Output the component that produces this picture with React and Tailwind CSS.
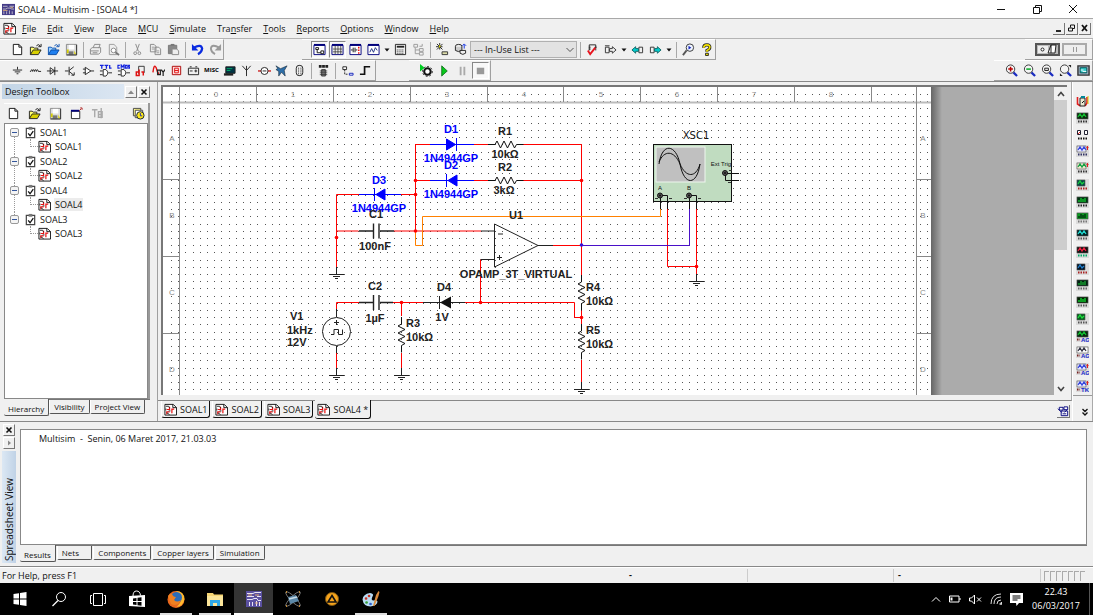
import clsx from 'clsx'

const ICONS = {
  newFile: (
    <>
      <path d="M2.5 1.5h6l3 3v8h-9z" fill="#fff" stroke="#111" />
      <path d="M8.5 1.5v3h3" fill="none" stroke="#111" />
    </>
  ),
  open: (
    <>
      <path d="M1.5 12.5v-8h3l1 1h4v2" fill="#ffff70" stroke="#222" />
      <path d="M1.5 12.5l3-5h8.500l-3 5z" fill="#d8d000" stroke="#222" />
      <path d="M8 3q2-2.500 4 0m1-2v3h-3" fill="none" stroke="#111" />
    </>
  ),
  openBlue: (
    <>
      <path d="M1.500 12.500v-8h3l1 1h4v2" fill="#9ad0ff" stroke="#0a50b0" />
      <path d="M1.500 12.500l3-5h8.500l-3 5z" fill="#2080f0" stroke="#0848a0" />
      <path d="M8 3q2-2.500 4 0m1-2v3h-3" fill="none" stroke="#0a50b0" />
    </>
  ),
  save: (
    <>
      <path d="M1.500 1.500h11v11h-11z" fill="#ddd" stroke="#888" />
      <path d="M4 2h6v5h-6z" fill="#fff" />
      <path d="M2 7h2v4h-2zM10 8l2 4h-2z" fill="#d8d000" />
      <path d="M4 9h5v4h-5z" fill="#777" />
      <path d="M12.500 2v11h-11" fill="none" stroke="#333" />
    </>
  ),
  print: (
    <>
      <path d="M4.500 5l1.500-3.500h6l-1.500 4M1.500 6.500l2-1.500h9v5l-2 2h-9z" fill="#eee" stroke="#888" />
      <path d="M2 8.500h8.500M4 10.500h5" stroke="#888" />
    </>
  ),
  preview: (
    <>
      <path d="M2.500 1.500h5l3 3v8h-8z" fill="#eee" stroke="#999" />
      <circle cx="7" cy="8" r="2.500" fill="#fff" stroke="#888" />
      <path d="M9 10l4 3" stroke="#777" strokeWidth="2" />
    </>
  ),
  cut: (
    <>
      <path d="M5 1l3 8M9 1l-3 8" stroke="#888" fill="none" />
      <circle cx="4.500" cy="11" r="1.500" fill="none" stroke="#888" />
      <circle cx="9" cy="11" r="1.500" fill="none" stroke="#888" />
    </>
  ),
  copy: (
    <>
      <path d="M1.500 1.500h4l2 2v6h-6zM6.500 4.500h4l2 2v6h-6z" fill="#eee" stroke="#888" />
      <path d="M3 4.500h3M3 6.500h3M8 8.500h3M8 10.500h3" stroke="#999" />
    </>
  ),
  paste: (
    <>
      <path d="M1.500 2.500h9v9h-9z" fill="#888" stroke="#777" />
      <path d="M4 1h4v2h-4z" fill="#777" />
      <path d="M5.500 6.500h5l2 2v4h-7z" fill="#eee" stroke="#888" />
    </>
  ),
  undo: (
    <>
      <path d="M3 5q8-4.500 9 1q-.5 4-4.500 6" fill="none" stroke="#0a2be0" strokeWidth="2.400" />
      <path d="M1 1v7h7z" fill="#0a2be0" />
    </>
  ),
  redo: (
    <>
      <path d="M11 5q-8-4.500-9 1q.5 4 4.500 6" fill="none" stroke="#999" strokeWidth="2" />
      <path d="M13 1v7h-7z" fill="#999" />
    </>
  ),
  hierarchy: (
    <>
      <path d="M1 2.500h12v10h-12z" fill="#fff" stroke="#00007c" />
      <path d="M1 2h12" stroke="#00007c" strokeWidth="2" />
      <path d="M3 5h3v2h-3zM4.500 7v3.500h4M8.500 8.500h3v3h-3z" fill="none" stroke="#111" />
    </>
  ),
  gridView: (
    <>
      <path d="M1 2.500h12v10h-12z" fill="#eee" stroke="#00007c" />
      <path d="M1 2h12" stroke="#00007c" strokeWidth="2" />
      <path d="M4.500 3v9M7.500 3v9M10.500 3v9M2 6.500h10M2 9.500h10" stroke="#333" strokeWidth=".8" />
    </>
  ),
  ladder: (
    <>
      <path d="M1 2.500h12v10h-12z" fill="#fff" stroke="#00007c" />
      <path d="M1 2h12" stroke="#00007c" strokeWidth="2" />
      <path d="M2 7.500h2M4.500 5v5M6.500 5v5M7 7.500h2" stroke="#111" />
      <path d="M10.500 4v2M10.500 7v1.500M10.500 10v1.500" stroke="#e00" strokeWidth="1.500" />
    </>
  ),
  grapher: (
    <>
      <path d="M1 2.500h12v10h-12z" fill="#fff" stroke="#00007c" />
      <path d="M1 2h12" stroke="#00007c" strokeWidth="2" />
      <path d="M3 10l2-4 2 4 2-5 2 3" fill="none" stroke="#1a2c80" />
    </>
  ),
  calc: (
    <>
      <path d="M1.500 1.500h11v11h-11z" fill="#eee" stroke="#222" />
      <path d="M3 4h8" stroke="#222" strokeWidth="2" />
      <path d="M3 7.500h8M3 9.500h8M3 11.500h8" stroke="#222" strokeDasharray="1 1" />
    </>
  ),
  treeGray: <path d="M2 1.500h4v3h-4zM3.500 5v6.500h4M3.500 7.500h4M8 6h4v3h-4zM8 10h4v3h-4zM8 3.500h3V1" fill="none" stroke="#999" />,
  wizard: (
    <>
      <path d="M1 1l6 6M4 0v7M0 4h7M7 1l-6 6" stroke="#222" />
      <path d="M4 2l1 2-2 1z" fill="#ff0" />
      <path d="M6.500 9.500h6v3h-6z" fill="#dda" stroke="#333" />
    </>
  ),
  database: (
    <>
      <ellipse cx="5" cy="3.500" rx="3.500" ry="2" fill="#eee" stroke="#222" />
      <path d="M1.500 4v4q3 2.500 7 0v-4" fill="#ccc" stroke="#222" />
      <path d="M6.500 8v3q3 2.500 6 0v-3z" fill="#eee" stroke="#222" />
      <path d="M11 6V2M9 3l2-2 2 2" stroke="#0a2be0" fill="none" />
    </>
  ),
  erc: (
    <>
      <path d="M3.500 8v-6h7v6M3 4.500h2M3 6.500h2M9.500 4.500h2" fill="none" stroke="#222" />
      <path d="M2 8l2.500 4L10 5" fill="none" stroke="#e8141e" strokeWidth="2" />
    </>
  ),
  transferOut: (
    <>
      <path d="M1.500 4.500h4v6h-4zM1 3h5" fill="none" stroke="#333" />
      <path d="M6 6h3v-2l4 3.500-4 3.500v-2h-3z" fill="#eee" stroke="#333" />
    </>
  ),
  backAnnotate: (
    <>
      <path d="M8.500 4.500h4v6h-4z" fill="none" stroke="#333" />
      <path d="M8 6h-3v-2l-4 3.500 4 3.500v-2h3z" fill="#0cc" stroke="#166" />
    </>
  ),
  forwardAnnotate: (
    <>
      <path d="M1.500 4.500h4v6h-4z" fill="none" stroke="#333" />
      <path d="M6 6h3v-2l4 3.500-4 3.500v-2h-3z" fill="#0cc" stroke="#166" />
    </>
  ),
  find: (
    <>
      <circle cx="8.500" cy="5" r="4" fill="#eef4ff" stroke="#333" />
      <path d="M5 8l-4 5" stroke="#555" strokeWidth="2" />
      <path d="M7 3v4l3-2z" fill="#12b" />
    </>
  ),
  help: (
    <>
      <path d="M4 5q0-3 3.500-3t3 3q0 1.500-3 3v1.500" fill="none" stroke="#222" strokeWidth="3.400" />
      <path d="M4 5q0-3 3.500-3t3 3q0 1.500-3 3v1.500" fill="none" stroke="#f0e000" strokeWidth="1.800" />
      <path d="M6 11h3v2.500h-3z" fill="#f0e000" stroke="#222" />
    </>
  ),
  source: <path d="M2 6.500h10M7 3v3M4 8.500h6M6 10.500h2" stroke="#222" fill="none" />,
  inductor: <path d="M1 8h1q1-4 2 0q1-4 2 0q1-4 2 0q1-4 2 0h3" stroke="#222" fill="none" />,
  diode: <path d="M1 7.500h12M4.500 4v7l5-3.500zM9.500 3v9" stroke="#222" fill="#fff" />,
  transistor: <path d="M1 7.500h4M5.500 3v9M5.500 7l5-4M5.500 8l5 4M8 12h3v-3" stroke="#222" fill="none" />,
  opamp: <path d="M3.500 3.500v8l6-4zM1 5.500h3M1 9.500h3M9 7.500h4" stroke="#222" fill="#fff" />,
  ttl: (
    <>
      <path d="M4.500 6v7h3q4-3.500 0-7zM1 7.500h3M1 11.500h3M10 9.500h4" stroke="#222" fill="#fff" />
      <path d="M1 1.500h4M3 1v4M6 1.500h4M8 1v4M11.500 1v3.500h2" stroke="#12d" strokeWidth="1.400" fill="none" />
    </>
  ),
  cmos: (
    <>
      <path d="M4.500 6v7h3q4-3.500 0-7zM1 7.500h3M1 11.500h3M10 9.500h4" stroke="#222" fill="#fff" />
      <path d="M3 1.500h-2v3h2M4.500 5V1l1.500 2 1.500-2v4M9 1.500h2v3h-2zM14 1.500h-1.500v1.500h1v1.500h-1.500" stroke="#12d" strokeWidth="1.200" fill="none" />
    </>
  ),
  digital: (
    <>
      <path d="M5 10.500v-8h6v7" fill="none" stroke="#333" />
      <path d="M2.500 8.500h3v4h-3zM5.500 6v7M8 8.500h2v4" fill="none" stroke="#e01010" strokeWidth="1.600" />
    </>
  ),
  mixed: (
    <>
      <path d="M1 9q1-10 3.500-5q1 5 3 7" fill="none" stroke="#e01010" strokeWidth="1.500" />
      <path d="M6 6.500h3v5h-3zM10 6l2 3 2-3M12 9v4" fill="none" stroke="#222" strokeWidth="1.300" />
    </>
  ),
  indicator: (
    <>
      <path d="M2.500 2.500h9v9h-9z" fill="#fdd" stroke="#a00" />
      <path d="M5 4.500h4v5h-4zM5 7h4" fill="none" stroke="#e01010" />
    </>
  ),
  power: <path d="M1.500 4.500h11v7h-11zM3 3h2M9 3h2M3 7.500h3M8 7.500h3M9.500 6v3" fill="none" stroke="#222" />,
  peripherals: (
    <>
      <path d="M3 3h10v7h-10z" fill="#034" stroke="#222" />
      <path d="M4 5h6M4 7h4" stroke="#0a6" />
      <path d="M1 10h10v2.500h-10z" fill="#222" />
    </>
  ),
  rf: <path d="M2.500 2l4.500 5 4.500-5M7 2v11" stroke="#222" fill="none" />,
  motor: (
    <>
      <path d="M0 7.500h14" stroke="#c22" strokeWidth="1.500" />
      <circle cx="7" cy="7.500" r="3.800" fill="#fff" stroke="#222" />
      <path d="M5 7.500h4" stroke="#222" />
    </>
  ),
  ni: <path d="M1 2l5 3 7-3-3 5 1 6-4-4-3 4v-5l-3-2 2-1z" fill="#2d6ea8" stroke="#123" strokeWidth=".6" />,
  connector: (
    <>
      <rect x="3.500" y="1.500" width="7" height="11" rx="3" fill="#eee" stroke="#222" />
      <path d="M6 4v7M8.500 4v7" stroke="#222" strokeDasharray="1 1" />
    </>
  ),
  mcu: (
    <>
      <path d="M2 2.500h10" stroke="#222" strokeWidth="3" strokeDasharray="3 .5" />
      <path d="M5 6h4v7h-4zM3 7.500h8M3 9.500h8M3 11.500h8" fill="#888" stroke="#222" strokeWidth=".8" />
    </>
  ),
  hierBlock: (
    <>
      <path d="M2 3h4v3h-4z" fill="#fff" stroke="#222" />
      <path d="M4 6v5h4" fill="none" stroke="#222" strokeDasharray="2 1" />
      <path d="M9 10h4v2h-4z" fill="#fff" stroke="#12b" />
    </>
  ),
  bus: <path d="M1 11h5V3h6" fill="none" stroke="#111" strokeWidth="1.800" />,
  interactive: (
    <>
      <circle cx="8" cy="8" r="3.500" fill="#fff" stroke="#111" strokeWidth="2.200" />
      <circle cx="8" cy="8" r="5.300" fill="none" stroke="#111" strokeDasharray="2 2" />
      <path d="M0 0v8l5-4z" fill="#0c2" />
    </>
  ),
  run: <path d="M4 2v11l6-5.500z" fill="#08c81c" stroke="#066010" strokeWidth=".8" />,
  pause: <path d="M4 3h2v9h-2zM8 3h2v9h-2z" fill="#aaa" />,
  stop: <path d="M3 4h8v7h-8z" fill="#999" />,
  zoomIn: <Magnifier mark={<path d="M3.500 5.500h5M6 3v5" stroke="#b00" strokeWidth="1.600" />} />,
  zoomOut: <Magnifier mark={<path d="M3.500 5.500h5" stroke="#0a2" strokeWidth="1.600" />} />,
  zoomArea: <Magnifier mark={<path d="M4 4.500h4v2.500h-4z" stroke="#222" fill="#ddd" />} />,
  zoomSheet: (
    <>
      <Magnifier />
      <path d="M10 1h3v3zM1 10v3h3z" fill="#222" />
    </>
  ),
  fullScreen: (
    <>
      <path d="M1 2h12v10h-12z" fill="#9ab" stroke="#333" strokeWidth="1.500" />
      <path d="M3.500 4h7v5.500h-7z" fill="#3cc" stroke="#055" />
      <path d="M4 6.500h3M6 8h4" stroke="#fff" />
    </>
  ),
  closeDesign: (
    <>
      <path d="M1.500 4.500h9v8h-9z" fill="#fff" stroke="#222" />
      <path d="M1 4h9" stroke="#00007c" strokeWidth="2" />
      <path d="M10 4l2-2M11 1h2v2" stroke="#b02020" fill="none" />
    </>
  ),
  rename: <path d="M1 3h6M4 3v8M8 5h4v6h-4zM8 8h4M11 1v11" fill="none" stroke="#aaa" strokeWidth="1.500" />,
  recent: (
    <>
      <path d="M1.500 1.500h8v8h-8z" fill="#fff890" stroke="#444" />
      <path d="M3.500 3.500h8v8h-8z" fill="#fff" stroke="#444" />
      <circle cx="9" cy="9" r="4" fill="#ffe818" stroke="#123" />
      <path d="M9 6.500v3h2" fill="none" stroke="#12b" />
    </>
  ),
  clipboard: (
    <>
      <path d="M2.500 2.500h9v10h-9z" fill="#fff" stroke="#444" strokeWidth="1.300" />
      <path d="M5 1h4v3h-4z" fill="#777" />
      <path d="M4.500 8l2 2.500 3.500-5" fill="none" stroke="#111" strokeWidth="1.400" />
    </>
  ),
  sheet: (
    <>
      <path d="M1 1.500h9l3.500 3.500v8h-12.500z" fill="#fff" stroke="#111" />
      <path d="M9.500 1.500v3.500h4" fill="none" stroke="#111" />
      <path d="M3 7h3V4M3 12V9.500h3M8.500 6v5M8 6.500h3" fill="none" stroke="#e81010" strokeWidth="1.300" />
      <path d="M2 3.500h3l1 2M2 6v2M5 8.500h2M3 10.500l3 2" fill="none" stroke="#222" />
    </>
  ),
  app: (
    <>
      <path d="M0 1h14v12h-14z" fill="#453c88" />
      <path d="M1 3.500h5M8 3.500h5M1 6.500h3l2-1h3l1 1h3M2 9v3M5 9v3M8 8v4M11 9v3" fill="none" stroke="#ddd" strokeWidth=".8" />
      <path d="M1 8h5M9 5h3" stroke="#d8a878" />
    </>
  ),
  windows: (
    <>
      <path d="M2.500 2.500h4v3h-4zM7.500 2h4v3h-4zM4.500 6.500h7v5h-7z" fill="#fff" stroke="#00007c" />
      <path d="M1 4l4 4M11 5l-3 3M6 9.500h4" stroke="#00007c" />
    </>
  ),
}

function Magnifier({ mark }) {
  return (
    <>
      <path d="M9 9l4 4" stroke="#1a2cc0" strokeWidth="2.400" />
      <circle cx="6" cy="5.500" r="4.500" fill="#f4f4f4" stroke="#333" />
      {mark}
    </>
  )
}

function Icon({ name }) {
  return (
    <svg viewBox="0 0 14 14" className="h-[13px] w-[13px] shrink-0" fill="none" aria-hidden="true">
      {ICONS[name]}
    </svg>
  )
}

function ToolButton({ name, pressed }) {
  return (
    <button
      aria-label={name}
      className={clsx(
        'flex h-[17px] w-[17px] shrink-0 items-center justify-center',
        pressed && 'border border-[#888] border-r-white border-b-white bg-[#f8f8f8]'
      )}
    >
      {name === 'misc' ? <span className="text-[6px] font-bold text-black">MISC</span> : <Icon name={name} />}
    </button>
  )
}

function Divider() {
  return <span className="mx-[2px] h-4 w-px shrink-0 bg-[#a8a8a8]" />
}

function Caret() {
  return (
    <svg viewBox="0 0 6 4" className="mx-px h-1 w-[6px] shrink-0" aria-hidden="true">
      <path d="M0.500 0.500h5L3 3.500z" fill="#111" />
    </svg>
  )
}

function TitleBar() {
  return (
    <header className="flex h-[19px] shrink-0 items-center border-b border-[#a8a8a8] bg-white pl-[2px]">
      <Icon name="app" />
      <h1 className="ml-[3px] flex-1">SOAL4 - Multisim - [SOAL4 *]</h1>
      <button aria-label="Minimize" className="flex w-9 justify-center">
        <svg viewBox="0 0 10 10" className="h-[10px] w-[10px]"><path d="M1 5.500h8" stroke="#111" /></svg>
      </button>
      <button aria-label="Restore" className="flex w-9 justify-center">
        <svg viewBox="0 0 10 10" className="h-[10px] w-[10px]" fill="none" stroke="#111">
          <path d="M1.500 3.500h6v6h-6zM3.500 3v-1.500h6v6h-2" />
        </svg>
      </button>
      <button aria-label="Close" className="mr-[2px] flex w-9 justify-center">
        <svg viewBox="0 0 10 10" className="h-[10px] w-[10px]" stroke="#111"><path d="M1 1l8 8M9 1l-8 8" /></svg>
      </button>
    </header>
  )
}

const MENUS = [
  ['', 'F', 'ile'], ['', 'E', 'dit'], ['', 'V', 'iew'], ['', 'P', 'lace'], ['', 'M', 'CU'], ['', 'S', 'imulate'],
  ['Tra', 'n', 'sfer'], ['', 'T', 'ools'], ['', 'R', 'eports'], ['', 'O', 'ptions'], ['', 'W', 'indow'], ['', 'H', 'elp'],
]

function MenuBar() {
  return (
    <nav className="flex h-5 shrink-0 items-center border-b border-[#b4b4b4] pr-[2px] pl-[3px]">
      <Icon name="sheet" />
      <div className="ml-[6px] flex flex-1 gap-[11px]">
        {MENUS.map(([before, key, after]) => (
          <button key={key + after}>
            {before}
            <u className="underline-offset-1">{key}</u>
            {after}
          </button>
        ))}
      </div>
      <div className="flex gap-px">
        <MdiButton label="Minimize child" d="M2 8h5" />
        <MdiButton label="Restore child" d="M1.500 5h4v3h-4zM3.500 4.500v-2.500h4v3.500h-1.500" thin />
        <MdiButton label="Close child" d="M2 2l5 6M7 2l-5 6" />
      </div>
    </nav>
  )
}

function MdiButton({ label, d, thin }) {
  return (
    <button aria-label={label} className="flex h-3 w-3 items-center justify-center border-r border-b border-[#777]">
      <svg viewBox="0 0 9 10" className="h-[10px] w-[9px]" fill="none" stroke="#111" strokeWidth={thin ? 1 : 1.8}>
        <path d={d} />
      </svg>
    </button>
  )
}

const PARTS = [
  'source', 'inductor', 'diode', 'transistor', 'opamp', 'ttl', 'cmos', 'digital', 'mixed',
  'indicator', 'power', 'misc', 'peripherals', 'rf', 'motor', 'ni', 'connector',
]

function Strip({ className, children }) {
  return (
    <div className={clsx('flex shrink-0 items-center gap-px border-t border-r border-b border-[#a0a0a0] border-t-white', className)}>
      {children}
    </div>
  )
}

function Toolbars() {
  return (
    <div className="shrink-0 border-b border-[#888]">
      <div className="flex h-[21px]">
        <Strip className="w-[224px] pl-[9px]">
          {['newFile', 'open', 'openBlue', 'save'].map((n) => <ToolButton key={n} name={n} />)}
          <Divider />
          {['print', 'preview'].map((n) => <ToolButton key={n} name={n} />)}
          <Divider />
          {['cut', 'copy', 'paste'].map((n) => <ToolButton key={n} name={n} />)}
          <Divider />
          {['undo', 'redo'].map((n) => <ToolButton key={n} name={n} />)}
        </Strip>
        <Strip className="ml-[78px] w-[414px] pl-[9px]">
          <ToolButton name="hierarchy" pressed />
          <ToolButton name="gridView" pressed />
          <ToolButton name="ladder" />
          <ToolButton name="grapher" />
          <Caret />
          <ToolButton name="calc" />
          <ToolButton name="treeGray" />
          <Divider />
          <ToolButton name="wizard" />
          <ToolButton name="database" />
          <div className="relative w-[107px]">
            <select aria-label="In-use list" className="block h-[17px] w-full appearance-none border border-[#b0b0b0] bg-[#e2e2e2] pl-[3px] leading-[14px]">
              <option>--- In-Use List ---</option>
            </select>
            <svg viewBox="0 0 8 6" className="pointer-events-none absolute top-[6px] right-[3px] h-[6px] w-2" fill="none" stroke="#555">
              <path d="M.5 1l3.500 3.500L7.500 1" />
            </svg>
          </div>
          <Divider />
          <ToolButton name="erc" />
          <ToolButton name="transferOut" />
          <Caret />
          <ToolButton name="backAnnotate" />
          <ToolButton name="forwardAnnotate" />
          <Caret />
          <Divider />
          <ToolButton name="find" />
          <ToolButton name="help" />
        </Strip>
        <Strip className="ml-auto w-[68px] justify-between pr-[5px] pl-[10px]">
          <button aria-label="Simulation switch">
            <svg viewBox="0 0 25 13" className="h-[13px] w-[25px]">
              <path d="M1 1h23v11h-23z" fill="#bbb" stroke="#555" strokeWidth="2" />
              <path d="M3 3h10v7h-10z" fill="#eee" />
              <path d="M13 10l3-8h5l-1 8zM16 2v8" fill="#fff" stroke="#222" />
              <circle cx="7.500" cy="6.500" r="1.500" fill="#fff" stroke="#222" />
            </svg>
          </button>
          <button aria-label="Pause switch">
            <svg viewBox="0 0 25 13" className="h-[13px] w-[25px]">
              <path d="M1 1h23v11h-23z" fill="#eee" stroke="#aaa" strokeWidth="2" />
              <path d="M11.500 4v5M14.500 4v5" stroke="#999" />
            </svg>
          </button>
        </Strip>
      </div>
      <div className="flex h-[21px]">
        <Strip className="w-[376px] justify-between pr-px pl-[9px]">
          <div className="flex w-[299px] justify-between">
            {PARTS.map((n) => <ToolButton key={n} name={n} />)}
          </div>
          <Divider />
          <ToolButton name="mcu" />
          <Divider />
          <ToolButton name="hierBlock" />
          <ToolButton name="bus" />
        </Strip>
        <Strip className="ml-[33px] w-[82px] pl-[9px]">
          <ToolButton name="interactive" />
          <ToolButton name="run" />
          <ToolButton name="pause" />
          <ToolButton name="stop" pressed />
        </Strip>
        <Strip className="ml-auto w-[99px] pl-[9px]">
          {['zoomIn', 'zoomOut', 'zoomArea', 'zoomSheet', 'fullScreen'].map((n) => <ToolButton key={n} name={n} />)}
        </Strip>
      </div>
    </div>
  )
}

const DESIGNS = ['SOAL1', 'SOAL2', 'SOAL4', 'SOAL3']

function PanelButton({ label, d }) {
  return (
    <button aria-label={label} className="flex h-3 w-3 items-center justify-center border border-white border-r-[#777] border-b-[#777]">
      <svg viewBox="0 0 8 8" className="h-2 w-2 shrink-0">{d}</svg>
    </button>
  )
}

const closeGlyph = <path d="M1.500 1.500l5 5M6.500 1.500l-5 5" stroke="#111" strokeWidth="1.600" />

function DesignToolbox() {
  return (
    <aside className="flex w-[158px] shrink-0 flex-col border-r border-[#a0a0a0] pt-[2px] pr-[7px] pb-[5px]">
      <div className="flex h-[15px] items-center gap-px pl-[2px]">
        <h2 className="flex h-full flex-1 items-center bg-linear-to-r from-[#c3d5e6] to-[#dbe6f2] pl-[3px]">Design Toolbox</h2>
        <PanelButton label="Collapse" d={<path d="M1 6h6L4 2.500z" fill="#888" />} />
        <PanelButton label="Close" d={closeGlyph} />
      </div>
      <div className="mt-1 ml-1 flex min-h-0 flex-1 flex-col border-r-2 border-[#999]">
        <div className="flex h-[20px] items-center gap-1 border-t border-white pr-px pl-px">
          {['newFile', 'open', 'save', 'closeDesign', 'rename'].map((n) => <ToolButton key={n} name={n} />)}
          <span className="flex-1" />
          <ToolButton name="recent" />
        </div>
        <ul className="min-h-0 flex-1 border border-[#888] bg-white pt-px">
          {DESIGNS.map((name, i) => (
            <li key={name} className="flex h-[29px]">
              <div className="flex w-[19px] flex-col items-center">
                <span className={clsx('h-[3px] border-l border-dotted border-[#999]', i === 0 && 'invisible')} />
                <button aria-label={`Collapse ${name}`} className="flex h-[9px] w-[9px] shrink-0 items-center justify-center rounded-[2px] border border-[#999] bg-[#f4f4f4]">
                  <span className="h-px w-[5px] bg-[#34569c]" />
                </button>
                <span className={clsx('flex-1 border-l border-dotted border-[#999]', i === DESIGNS.length - 1 && 'invisible')} />
              </div>
              <div>
                <div className="flex h-[14px] items-center gap-[3px]">
                  <Icon name="clipboard" />
                  {name}
                </div>
                <div className="flex h-[15px] items-center">
                  <span className="mb-[7px] ml-[6px] h-2 w-2 border-b border-l border-dotted border-[#999]" />
                  <Icon name="sheet" />
                  <span className={clsx('ml-[3px] px-px leading-[13px]', name === 'SOAL4' && 'bg-[#ececec]')}>{name}</span>
                </div>
              </div>
            </li>
          ))}
        </ul>
      </div>
      <div className="ml-1 flex h-[17px] items-start border-t border-[#777]">
        <PageTab active>Hierarchy</PageTab>
        <PageTab>Visibility</PageTab>
        <PageTab>Project View</PageTab>
      </div>
    </aside>
  )
}

function PageTab({ active, children }) {
  return (
    <button
      className={clsx(
        'flex items-center rounded-b-[2px] border-r border-b border-[#555] px-1 text-[8px] whitespace-nowrap',
        active ? '-mt-px h-[17px] bg-[#f0f0f0] pt-[2px]' : 'h-[14px] border-l border-l-white'
      )}
    >
      {children}
    </button>
  )
}

const PITCH = 7.2
const GRID = Array.from({ length: 43 }, (_, row) =>
  Array.from({ length: 106 }, (_, col) => `M${Math.round(171 + col * PITCH)} ${Math.round(94 + row * PITCH)}.5h1`).join('')
).join('')

const RED = '#ff0000'
const BLUE = '#0000ff'

function Ground({ x, y }) {
  return <path d={`M${x - 7} ${y}.5h15M${x - 3} ${y + 2}.5h7M${x - 1} ${y + 4}.5h3`} stroke="#222" />
}

function ResistorH({ x, y }) {
  return <path d={`M${x - 7} ${y}h7l2-3.500 3.500 7 3.500-7 3.500 7 3.500-7 3.500 7 2-3.500h7`} stroke="#111" />
}

function ResistorV({ x, y }) {
  return <path d={`M${x} ${y - 7}v7l-3.500 2 7 3.500-7 3.500 7 3.500-7 3.500 7 3.500-3.500 2v7`} stroke="#111" />
}

function Label({ x, y, children, color = '#222', anchor = 'middle' }) {
  return (
    <text x={x} y={y} fill={color} stroke="none" textAnchor={anchor} className="font-['Liberation_Sans',Arial,sans-serif] text-[11px] font-bold">
      {children}
    </text>
  )
}

function Jack({ x, y }) {
  return (
    <>
      <circle cx={x} cy={y} r="2.500" fill="#555" stroke="#111" />
      <circle cx={x} cy={y} r="1" fill="#111" stroke="none" />
    </>
  )
}

function Schematic() {
  return (
    <svg viewBox="163 87 768 308" className="h-[308px] w-[768px] shrink-0 bg-white" fill="none" role="img" aria-label="Schematic sheet">
      <path d={GRID} stroke="#555" shapeRendering="crispEdges" />
      <path d="M163 102.500h768" stroke="#bbb" strokeWidth="2" />
      <path d="M179.500 87v308M916.500 87v308" stroke="#888" />
      <g stroke="#888">
        {[256, 333, 410, 487, 563, 640, 717, 794, 871].map((x) => <path key={x} d={`M${x}.5 87v15`} />)}
        {[179, 256, 333].map((y) => <path key={y} d={`M163 ${y}.5h16M917 ${y}.5h14`} />)}
      </g>
      <g fill="#888" textAnchor="middle" className="font-['Liberation_Sans',Arial,sans-serif] text-[8px]">
        {[216, 293, 370, 447, 524, 601, 677, 754, 831].map((x, i) => <text key={x} x={x} y="97">{i}</text>)}
        {['A', 'B', 'C', 'D'].map((c, i) => (
          <g key={c}>
            <text x="172" y={141 + i * 77}>{c}</text>
            <text x="923" y={141 + i * 77}>{c}</text>
          </g>
        ))}
      </g>

      <g stroke={RED}>
        <path d="M415.500 144.500h15M474 144.500h15M523 144.500h58.500V275M415.500 144V231" />
        <path d="M415.500 180.500h15M474 180.500h15M523 180.500h58" />
        <path d="M336.500 267V194.500H359M401 194.500h14M336.500 231h22M394 231h87" />
        <path d="M336.500 309v-6.500H359M393 302.500h30M465 302.500h109.500V317.500h7M480.500 302V259.500" />
        <path d="M401.500 302v14M401.500 353v15M336.500 353v15M581.500 310v14M581.500 360v22M553 245.500h28" />
        <path d="M667.500 209v57.500h29M696.500 209v65" />
      </g>
      <path d="M415.500 231V245.500h7V216.500H660.500V209" stroke="#ff8000" />
      <path d="M581 245.500H689.500V209" stroke="#4a10c8" />

      <g stroke="#222">
        <path d="M359 231h14M380 231h14M359 302.500h14M380 302.500h13M373.500 223.500v15M379 223.500v15M373.500 295v15M379 295v15" strokeWidth="1.400" />
        <path d="M481 231h13M480.500 259.500h14M538 245.500h15M494.500 224v43l43.500-21.500zM498 234h5M497 257.500h5M499.500 255v5" />
        <path d="M423 302.500h42M439.500 296v13M336.500 267v7M401.500 368v7M336.500 368v7M581.500 382v7M696.500 274v7" />
        <path d="M336.500 309v8M336.500 346v7M334 322.500h5M336.500 320v5M331 334.500h3v-5h4.500v5h4v-5" />
        <circle cx="336.500" cy="331.500" r="14" />
      </g>
      <path d="M451 296.500v12l-11-6z" fill="#111" />

      <g stroke={BLUE} fill={BLUE}>
        <path d="M430 144.500h44M430 180.500h44M359 194.500h42M456.500 138v13M446.500 174v13M374.500 188v13" />
        <path d="M446.500 139v11l9-5.500zM457 175v11l-9-5.500zM385 189v11l-9-5.500z" />
      </g>

      <ResistorH x={495} y={144.5} />
      <ResistorH x={495} y={180.5} />
      <ResistorV x={401.5} y={324} />
      <ResistorV x={581.5} y={282} />
      <ResistorV x={581.5} y={331} />
      <Ground x={336} y={274} />
      <Ground x={336} y={375} />
      <Ground x={401} y={375} />
      <Ground x={581} y={389} />
      <Ground x={696} y={281} />

      <g fill={RED}>
        {[[336.5, 237.5], [415.5, 231], [415.5, 194.5], [415.5, 180.5], [581.5, 180.5], [401.5, 302.5], [480.5, 302.5], [581.5, 317.5], [696.5, 266.5]].map(
          ([x, y]) => <circle key={`${x},${y}`} cx={x} cy={y} r="1.800" />
        )}
      </g>
      <circle cx="581.500" cy="245" r="1.800" fill="#3a10d8" />

      <Label x={451} y={133} color={BLUE}>D1</Label>
      <Label x={451} y={162} color={BLUE}>1N4944GP</Label>
      <Label x={451} y={169} color={BLUE}>D2</Label>
      <Label x={451} y={198} color={BLUE}>1N4944GP</Label>
      <Label x={379} y={184} color={BLUE}>D3</Label>
      <Label x={379} y={212} color={BLUE}>1N4944GP</Label>
      <Label x={505} y={135}>R1</Label>
      <Label x={505} y={158}>10kΩ</Label>
      <Label x={505} y={171}>R2</Label>
      <Label x={504} y={194}>3kΩ</Label>
      <Label x={376} y={218}>C1</Label>
      <Label x={375} y={250}>100nF</Label>
      <Label x={516} y={219}>U1</Label>
      <Label x={516} y={278}>OPAMP_3T_VIRTUAL</Label>
      <Label x={375} y={290}>C2</Label>
      <Label x={375} y={322}>1µF</Label>
      <Label x={444} y={291}>D4</Label>
      <Label x={442} y={321}>1V</Label>
      <Label x={406} y={327} anchor="start">R3</Label>
      <Label x={406} y={341} anchor="start">10kΩ</Label>
      <Label x={586} y={291} anchor="start">R4</Label>
      <Label x={586} y={305} anchor="start">10kΩ</Label>
      <Label x={586} y={334} anchor="start">R5</Label>
      <Label x={586} y={348} anchor="start">10kΩ</Label>
      <Label x={290} y={320} anchor="start">V1</Label>
      <Label x={287} y={334} anchor="start">1kHz</Label>
      <Label x={287} y={346} anchor="start">12V</Label>

      <rect x="653.500" y="144.500" width="78" height="57" fill="#c0dcc0" stroke="#111" />
      <rect x="656" y="147" width="49" height="35" fill="#c0c0c0" stroke="#eef6ee" />
      <path d="M659 164C662 142 676 144 680 164C684 186 697 186 700 164M659 162C664 150 674 150 680 164C686 178 696 178 700 164" stroke="#111" />
      <path d="M660.500 195v14M661 195.500h6.500V209M689.500 195v14M690 195.500h6.500V209M725.500 173.500H739M725.500 173v7.500H739" stroke="#111" />
      <path d="M655 198.500h3M669 198.500h3M684 198.500h3M698 198.500h3M729 170.500h3M728 182.500h3" stroke="#333" />
      <Jack x={660} y={195.5} />
      <Jack x={689} y={195.5} />
      <Jack x={725} y={173} />
      <g fill="#111" textAnchor="middle" className="font-['Liberation_Sans',Arial,sans-serif] text-[6px]">
        <text x="721" y="166">Ext Trig</text>
        <text x="660" y="190">A</text>
        <text x="689" y="190">B</text>
      </g>
      <text x="696" y="139" fill="#111" textAnchor="middle" className="font-['DejaVu_Sans',sans-serif] text-[10px]">XSC1</text>
    </svg>
  )
}

function ScrollArrow({ label, d }) {
  return (
    <button aria-label={label} className="flex h-[13px] w-full shrink-0 items-center justify-center">
      <svg viewBox="0 0 8 6" className="h-[6px] w-2" fill="none" stroke="#444" strokeWidth="1.600"><path d={d} /></svg>
    </button>
  )
}

const SHEETS = ['SOAL1', 'SOAL2', 'SOAL3', 'SOAL4 *']

function Workspace() {
  return (
    <main className="flex min-w-0 flex-1 flex-col">
      <div className="flex min-h-0 flex-1 border-r border-b border-r-[#aaa] border-b-[#888] pt-[3px] pr-1 pb-[5px] pl-[3px]">
        <div className="flex min-w-0 flex-1 border-t-2 border-l-2 border-[#777]">
          <Schematic />
          <div className="flex-1 bg-[#ababab]">
            <div className="h-full w-[11px] bg-linear-to-r from-[#666] to-[#ababab]" />
          </div>
          <div className="flex w-[13px] shrink-0 flex-col bg-[#f0f0f0]">
            <ScrollArrow label="Scroll up" d="M1 5l3-3.500 3 3.500" />
            <div className="h-[150px] bg-[#cdcdcd]" />
            <span className="flex-1" />
            <ScrollArrow label="Scroll down" d="M1 1l3 3.500 3-3.500" />
          </div>
        </div>
      </div>
      <div className="flex h-5 shrink-0 items-start gap-[2px] pr-[2px] pl-[3px]">
        {SHEETS.map((name, i) => (
          <button
            key={name}
            className={clsx(
              'flex items-center gap-[3px] rounded-b-[3px] border-r border-b border-[#111] px-[2px] whitespace-nowrap',
              i === 3 ? '-mt-px h-[19px] bg-[#f0f0f0]' : 'h-[17px] border-l border-l-white'
            )}
          >
            <Icon name="sheet" />
            {name}
          </button>
        ))}
        <span className="flex-1" />
        <button aria-label="Windows" className="mt-1 flex h-[13px] w-[13px] items-center justify-center border-r border-b border-[#777]">
          <Icon name="windows" />
        </button>
      </div>
    </main>
  )
}

const INSTRUMENTS = [
  { name: 'Multimeter', meter: true },
  { name: 'Function generator', screen: '#0b2a10', trace: '#12c030', knobs: '#333' },
  { name: 'Wattmeter', split: true, knobs: '#111' },
  { name: 'Oscilloscope', screen: '#e8e8ff', trace: '#3344dd', dot: '#e02020', knobs: '#336' },
  { name: 'Four channel oscilloscope', screen: '#f4e8d0', trace: '#10a040', dot: '#e02020', knobs: '#333' },
  { name: 'Bode plotter', screen: '#064a44', trace: '#18d040', narrow: true, knobs: '#a22' },
  { name: 'Frequency counter', screen: '#031', bars: '#12c030', knobs: '#222' },
  { name: 'Word generator', screen: '#0a9a20', bars: '#031', knobs: '#777' },
  { name: 'Logic converter', screen: '#022', trace: '#20d8d0', knobs: '#555' },
  { name: 'Logic analyzer', screen: '#111', trace: '#f02040', knobs: '#0a6' },
  { name: 'IV analyzer', screen: '#012', trace: '#2080d0', narrow: true, knobs: '#a22' },
  { name: 'Distortion analyzer', screen: '#021', bars: '#18a030', knobs: '#666' },
  { name: 'Spectrum analyzer', screen: '#020', bars: '#10d030', knobs: '#555' },
  { name: 'Network analyzer', screen: '#086020', trace: '#20e040', narrow: true, knobs: '#555' },
  { name: 'Agilent function generator', screen: '#0b2a10', trace: '#12c030', tag: 'AG' },
  { name: 'Agilent multimeter', screen: '#fff', trace: '#334', tag: 'AG' },
  { name: 'Agilent oscilloscope', screen: '#e8e8ff', trace: '#3344dd', dot: '#e02020', tag: 'AG' },
  { name: 'Tektronix oscilloscope', screen: '#e8e8ff', trace: '#3344dd', dot: '#e02020', tag: 'TK' },
]

function Instrument({ item }) {
  const w = item.narrow ? 8 : item.dot ? 9 : 11
  return (
    <button aria-label={item.name} className="flex h-3 w-[13px] items-center justify-center">
      <svg viewBox="0 0 13 12" className="h-3 w-[13px]" fill="none">
        {item.meter && (
          <>
            <path d="M1.500 2v7l3 2M11 2v6l-2 3" stroke="#e02020" strokeWidth="1.600" />
            <path d="M4 3h5v8h-5z" fill="#e8e8d0" stroke="#222" />
            <path d="M5 1h4v2h-4z" fill="#089" />
            <path d="M12 1v8" stroke="#d8c800" />
            <path d="M6 8l2-2" stroke="#111" />
          </>
        )}
        {item.split && <path d="M1.500 1.500h3v4h-3zM8.500 1.500h3v4h-3z" fill="#fff" stroke="#223" />}
        {item.split && <path d="M2 5l2-2" stroke="#e02020" />}
        {item.screen && <path d="M0 0h13v12h-13z" fill="#dcdcdc" />}
        {item.screen && <path d={`M1 1h${w}v6h-${w}z`} fill={item.screen} stroke="#555" strokeWidth=".6" />}
        {item.trace && <path d={w === 8 ? 'M2 5l2-3 2 3 2-2' : 'M2 5l2-3 2 3 2-3 2 3'} stroke={item.trace} strokeWidth="1.300" />}
        {item.bars && <path d="M3 6v-2M5 6V2M7 6v-3M9 6V2" stroke={item.bars} strokeWidth="1.400" />}
        {item.dot && <path d="M10.500 2.500h2M11.500 1v4" stroke={item.dot} />}
        {item.knobs && <path d="M2 9.500h9" stroke={item.knobs} strokeWidth="2" strokeDasharray="1.500 1" />}
        {item.tag && <path d="M1 9.500h3" stroke="#722" strokeWidth="2" strokeDasharray="1 .5" />}
        {item.tag && <text x="5" y="12" fill="#1428d0" className="font-['Liberation_Sans',sans-serif] text-[6px] font-bold">{item.tag}</text>}
      </svg>
    </button>
  )
}

function InstrumentBar() {
  return (
    <div className="flex w-[21px] shrink-0 flex-col items-center border-r border-l border-r-[#aaa] border-l-white pt-[13px] pb-1">
      <div className="flex min-h-0 flex-1 flex-col justify-between pb-[3px]">
        {INSTRUMENTS.map((item) => <Instrument key={item.name} item={item} />)}
      </div>
      <div className="flex h-[22px] w-full justify-center border-t border-[#999] pt-[12px] pl-[5px]">
        <button aria-label="More instruments" className="h-2">
          <svg viewBox="0 0 6 8" className="h-2 w-[6px]" fill="none" stroke="#111" strokeWidth="1.300">
            <path d="M.5 1l2.500 2.500L5.500 1M.5 4.500L3 7l2.500-2.500" />
          </svg>
        </button>
      </div>
    </div>
  )
}

function SpreadsheetView() {
  return (
    <section className="flex h-[146px] shrink-0 border-t border-b border-[#888] pt-[2px]">
      <div className="flex w-5 shrink-0 flex-col items-center gap-px pr-[2px] pb-[3px]">
        <PanelButton label="Close spreadsheet view" d={closeGlyph} />
        <PanelButton label="Expand" d={<path d="M3 1.500v5l3-2.500z" fill="#888" />} />
        <div className="mt-px flex min-h-0 w-[14px] flex-1 rotate-180 items-start bg-linear-to-r from-[#c0d2e6] to-[#dce8f4]">
          <h2 className="pt-[2px] text-[10px] leading-[14px] whitespace-nowrap [writing-mode:vertical-rl]">Spreadsheet View</h2>
        </div>
      </div>
      <div className="flex min-w-0 flex-1 flex-col pt-[5px] pr-[6px] pb-[5px]">
        <div className="flex-1 border border-[#888] bg-white pt-[2px] pl-[18px] whitespace-pre">Multisim  -  Senin, 06 Maret 2017, 21.03.03</div>
        <div className="flex h-4 items-start gap-px border-t border-[#777]">
          <PageTab active>Results</PageTab>
          <PageTab>Nets&nbsp;&nbsp;&nbsp;&nbsp;</PageTab>
          <PageTab>Components</PageTab>
          <PageTab>Copper layers</PageTab>
          <PageTab>Simulation</PageTab>
        </div>
      </div>
    </section>
  )
}

function StatusBar() {
  return (
    <footer className="flex h-4 shrink-0 items-center border-t border-white pl-[2px]">
      <span className="flex-1">For Help, press F1</span>
      <span className="h-[13px] w-[119px] border-r border-[#ccc] leading-[12px] font-bold">-</span>
      <span className="h-[13px] w-[146px] border-r border-[#ccc]" />
      <span className="h-[13px] w-[147px] border-r border-[#ccc] pl-1 leading-[12px] font-bold">-</span>
      <div className="flex w-[52px] gap-px pl-[3px]">
        {[0, 1, 2, 3, 4, 5, 6].map((i) => (
          <span key={i} className="h-[10px] w-[5px] border-t border-l border-[#aaa]" />
        ))}
      </div>
    </footer>
  )
}

const TASKS = [
  { name: 'Start', art: <path d="M2.500 4l5.500-.8v5.300H2.500zM9 3l6.500-1v6.500H9zM2.500 9.500H8v5.300L2.500 14zM9 9.500h6.500V16L9 15z" fill="#fff" /> },
  {
    name: 'Search',
    art: (
      <>
        <circle cx="11" cy="7" r="4.500" stroke="#fff" />
        <path d="M8 10.500L2.500 16" stroke="#fff" strokeWidth="1.300" />
      </>
    ),
  },
  { name: 'Task view', art: <path d="M4.500 3.500h9v12h-9zM3 5.500H1.500v8H3M15 5.500h1.500v8H15" stroke="#fff" /> },
  {
    name: 'Store',
    art: (
      <>
        <path d="M1 6l16-1v12L1 16z" fill="#fff" />
        <path d="M5 6q0-5 3.500-5t4 4.500" stroke="#fff" />
        <path d="M5 8.500l3.500-.5v3H5zM9.500 7.800l4-.5v3.700h-4zM5 12h3.500v3L5 14.500zM9.500 12h4v3.700l-4-.5z" fill="#000" />
      </>
    ),
  },
  {
    name: 'Firefox',
    line: 'bg-[#ddd]',
    art: (
      <>
        <circle cx="9" cy="9.500" r="8.500" fill="#e8661c" />
        <path d="M9 1q8 0 8.500 8q-1 7-8 8q6-5 4-11z" fill="#ffb92e" />
        <circle cx="9.500" cy="7.500" r="5.500" fill="#2c6cb8" />
        <path d="M1 6q2-3 4-2q1 3 4 3l-2 3q3 3 7 0q-3 7-10 4z" fill="#f08020" />
      </>
    ),
  },
  {
    name: 'File Explorer',
    line: 'bg-[#ddd]',
    art: (
      <>
        <path d="M1 3h6l1 1.500h9V16H1z" fill="#f6d574" />
        <path d="M1 6h16v10H1z" fill="#fbe59a" />
        <path d="M4 16v-6h10v6h-3v-3H7v3z" fill="#30a8e8" />
      </>
    ),
  },
  {
    name: 'Multisim',
    line: 'bg-white',
    active: true,
    art: (
      <>
        <path d="M1 1h16v16H1z" fill="#5a50a0" />
        <path d="M2 3.500h6l2-1h6M2 6.500h7M12 6.500h4M2 9.500h5l2-1h3l1 2h3M4.500 12v4M7.500 12v4M11.500 11v5M14.500 12v4" stroke="#e8e4f4" />
        <path d="M3 5h4M10 13h3M10 5h4" stroke="#e0a870" />
      </>
    ),
  },
  {
    name: 'Proteus',
    art: (
      <>
        <ellipse cx="9" cy="9" rx="10" ry="2.500" transform="rotate(45 9 9)" stroke="#8c8c8c" strokeWidth=".8" />
        <ellipse cx="9" cy="9" rx="10" ry="2.500" transform="rotate(-45 9 9)" stroke="#8c8c8c" strokeWidth=".8" />
        <path d="M4 7l8-2 3 6-9 3z" fill="#5b88a8" />
        <path d="M5 9l8-2" stroke="#c8dce8" strokeWidth="1.500" />
        <path d="M2 2h1M15 2h1M2 16h1M15 16h1" stroke="#e8a030" strokeWidth="1.500" />
      </>
    ),
  },
  {
    name: 'Player',
    art: (
      <>
        <circle cx="9" cy="9" r="6.500" fill="#f5a31c" stroke="#7c5410" />
        <path d="M9 5.500l4 6.500H5z" stroke="#111" strokeWidth="1.600" />
      </>
    ),
  },
  {
    name: 'Paint',
    line: 'bg-[#ddd]',
    art: (
      <>
        <path d="M8 3q-7 1-7.500 6.500q1 7 8 7q7-1 7-5q-1-2-4-1q-3 0-1-4q2-3-2.500-3.500z" fill="#b8dcf4" />
        <path d="M4 8.500h.1M7 6h.1" stroke="#c83020" strokeWidth="2.600" strokeLinecap="round" />
        <path d="M4.500 12.500h.1" stroke="#38a038" strokeWidth="2.600" strokeLinecap="round" />
        <path d="M8.500 14h.1" stroke="#3060d0" strokeWidth="2.600" strokeLinecap="round" />
        <path d="M11 16L14 5l2.500-4 1 1-1 4L12.500 16z" fill="#d98a3c" />
      </>
    ),
  },
]

function Taskbar() {
  return (
    <div className="flex h-8 shrink-0 items-center bg-black text-white">
      {TASKS.map((task) => (
        <button
          key={task.name}
          aria-label={task.name}
          className={clsx('flex h-full w-[39px] shrink-0 flex-col items-center justify-end', task.active && 'bg-[#343434]')}
        >
          <svg viewBox="0 0 18 18" className="mb-[5px] h-[18px] w-[18px]" fill="none">{task.art}</svg>
          <span className={clsx('h-[2px]', task.active ? 'w-full' : 'w-8', task.line)} />
        </button>
      ))}
      <div className="ml-auto flex h-full items-center gap-2">
        <button aria-label="Show hidden icons">
          <svg viewBox="0 0 10 6" className="h-[6px] w-[10px]" fill="none" stroke="#fff"><path d="M1 5.500l4-4 4 4" /></svg>
        </button>
        <svg viewBox="0 0 12 8" className="h-2 w-3" fill="none" stroke="#fff" aria-label="Battery">
          <path d="M.5 1h9.500v6H.5zM11 3v2" />
          <path d="M2.500 2.500v3" strokeWidth="2" />
        </svg>
        <svg viewBox="0 0 13 11" className="h-[11px] w-[13px]" fill="none" stroke="#fff" aria-label="Volume muted">
          <path d="M.5 4h2l3-3v9l-3-3h-2zM8 3.500l4 4M12 3.500l-4 4" />
        </svg>
        <svg viewBox="0 0 12 12" className="h-3 w-3" fill="none" stroke="#ddd" aria-label="Network">
          <path d="M1 11Q1 1 11 1M4 11q0-7 7-7M7 11q0-4 4-4" />
          <path d="M9.500 11h2v-2" strokeWidth="1.600" />
        </svg>
        <svg viewBox="0 0 13 13" className="h-[13px] w-[13px]" aria-label="Notifications">
          <path d="M0 0h13v10H9l-2.500 3L6 10H0z" fill="#fff" />
          <path d="M2.500 3h8M2.500 5h8M2.500 7h5" stroke="#000" />
        </svg>
        <div className="w-[50px] text-center leading-[14px]">
          <div>22.43</div>
          <div>06/03/2017</div>
        </div>
        <button aria-label="Show desktop" className="h-full w-1 border-l border-[#555]" />
      </div>
    </div>
  )
}

export default function App() {
  return (
    <div className="flex h-screen flex-col overflow-hidden bg-[#f0f0f0] font-['Open_Sans',sans-serif] text-[9px] leading-[13px] text-[#111]">
      <TitleBar />
      <MenuBar />
      <Toolbars />
      <div className="flex min-h-0 flex-1">
        <DesignToolbox />
        <Workspace />
        <InstrumentBar />
      </div>
      <SpreadsheetView />
      <StatusBar />
      <Taskbar />
    </div>
  )
}
